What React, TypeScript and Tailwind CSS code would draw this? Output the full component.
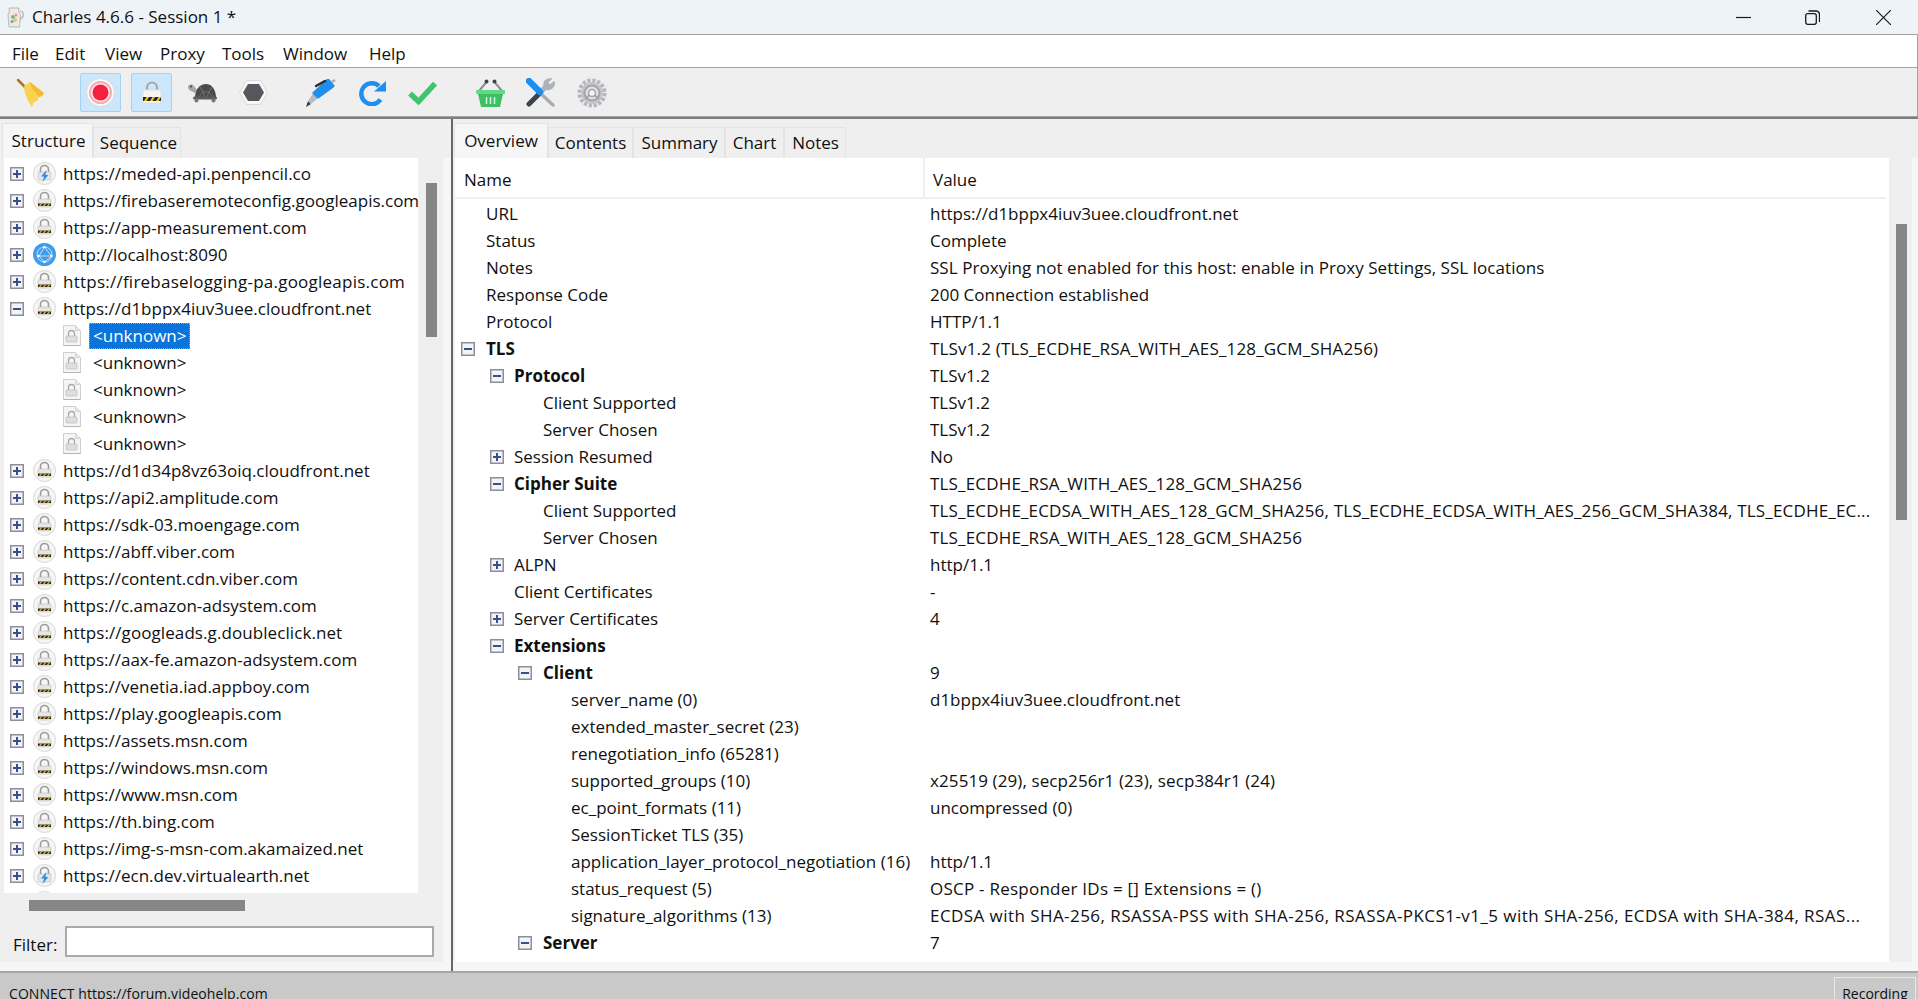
import type { ReactNode } from 'react';

const FONT = "font-['Open_Sans','Noto_Sans',sans-serif]";

type Host = { url: string; kind: 'lock' | 'bolt' | 'globe'; open?: boolean; track?: string };

const hostsTop: Host[] = [
  { url: 'https://meded-api.penpencil.co', kind: 'bolt' },
  { url: 'https://firebaseremoteconfig.googleapis.com', kind: 'lock' },
  { url: 'https://app-measurement.com', kind: 'lock' },
  { url: 'http://localhost:8090', kind: 'globe' },
  { url: 'https://firebaselogging-pa.googleapis.com', kind: 'lock', track: 'tracking-[0.24px]' },
  { url: 'https://d1bppx4iuv3uee.cloudfront.net', kind: 'lock', open: true },
];

const hostsBottom: Host[] = [
  { url: 'https://d1d34p8vz63oiq.cloudfront.net', kind: 'lock' },
  { url: 'https://api2.amplitude.com', kind: 'lock' },
  { url: 'https://sdk-03.moengage.com', kind: 'lock' },
  { url: 'https://abff.viber.com', kind: 'lock' },
  { url: 'https://content.cdn.viber.com', kind: 'lock' },
  { url: 'https://c.amazon-adsystem.com', kind: 'lock' },
  { url: 'https://googleads.g.doubleclick.net', kind: 'lock', track: 'tracking-[0.08px]' },
  { url: 'https://aax-fe.amazon-adsystem.com', kind: 'lock' },
  { url: 'https://venetia.iad.appboy.com', kind: 'lock' },
  { url: 'https://play.googleapis.com', kind: 'lock' },
  { url: 'https://assets.msn.com', kind: 'lock' },
  { url: 'https://windows.msn.com', kind: 'lock' },
  { url: 'https://www.msn.com', kind: 'lock' },
  { url: 'https://th.bing.com', kind: 'lock' },
  { url: 'https://img-s-msn-com.akamaized.net', kind: 'lock' },
  { url: 'https://ecn.dev.virtualearth.net', kind: 'bolt' },
];

type Row = { name: string; value?: string; level: number; bold?: boolean; toggle?: 'open' | 'closed'; track?: string };

const TLS = 'tracking-[0.17px]';

const rows: Row[] = [
  { name: 'URL', value: 'https://d1bppx4iuv3uee.cloudfront.net', level: 0 },
  { name: 'Status', value: 'Complete', level: 0 },
  { name: 'Notes', value: 'SSL Proxying not enabled for this host: enable in Proxy Settings, SSL locations', level: 0, track: 'tracking-[0.05px]' },
  { name: 'Response Code', value: '200 Connection established', level: 0 },
  { name: 'Protocol', value: 'HTTP/1.1', level: 0 },
  { name: 'TLS', value: 'TLSv1.2 (TLS_ECDHE_RSA_WITH_AES_128_GCM_SHA256)', level: 0, bold: true, toggle: 'open', track: TLS },
  { name: 'Protocol', value: 'TLSv1.2', level: 1, bold: true, toggle: 'open' },
  { name: 'Client Supported', value: 'TLSv1.2', level: 2 },
  { name: 'Server Chosen', value: 'TLSv1.2', level: 2 },
  { name: 'Session Resumed', value: 'No', level: 1, toggle: 'closed' },
  { name: 'Cipher Suite', value: 'TLS_ECDHE_RSA_WITH_AES_128_GCM_SHA256', level: 1, bold: true, toggle: 'open', track: TLS },
  { name: 'Client Supported', value: 'TLS_ECDHE_ECDSA_WITH_AES_128_GCM_SHA256, TLS_ECDHE_ECDSA_WITH_AES_256_GCM_SHA384, TLS_ECDHE_EC...', level: 2, track: TLS },
  { name: 'Server Chosen', value: 'TLS_ECDHE_RSA_WITH_AES_128_GCM_SHA256', level: 2, track: TLS },
  { name: 'ALPN', value: 'http/1.1', level: 1, toggle: 'closed' },
  { name: 'Client Certificates', value: '-', level: 1 },
  { name: 'Server Certificates', value: '4', level: 1, toggle: 'closed' },
  { name: 'Extensions', level: 1, bold: true, toggle: 'open' },
  { name: 'Client', value: '9', level: 2, bold: true, toggle: 'open' },
  { name: 'server_name (0)', value: 'd1bppx4iuv3uee.cloudfront.net', level: 3 },
  { name: 'extended_master_secret (23)', level: 3 },
  { name: 'renegotiation_info (65281)', level: 3 },
  { name: 'supported_groups (10)', value: 'x25519 (29), secp256r1 (23), secp384r1 (24)', level: 3, track: 'tracking-[0.1px]' },
  { name: 'ec_point_formats (11)', value: 'uncompressed (0)', level: 3 },
  { name: 'SessionTicket TLS (35)', level: 3 },
  { name: 'application_layer_protocol_negotiation (16)', value: 'http/1.1', level: 3 },
  { name: 'status_request (5)', value: 'OSCP - Responder IDs = [] Extensions = ()', level: 3, track: 'tracking-[0.24px]' },
  { name: 'signature_algorithms (13)', value: 'ECDSA with SHA-256, RSASSA-PSS with SHA-256, RSASSA-PKCS1-v1_5 with SHA-256, ECDSA with SHA-384, RSAS...', level: 3, track: 'tracking-[0.44px]' },
  { name: 'Server', value: '7', level: 2, bold: true, toggle: 'open' },
];

// small +/- box used by both trees
function Toggle({ open }: { open?: boolean }) {
  return (
    <svg width="14" height="14" viewBox="0 0 14 14" className="shrink-0">
      <rect x="0.75" y="0.75" width="12.5" height="12.5" fill="#f3f4f8" stroke="#8d8f96" strokeWidth="1.5" />
      <path d={open ? 'M3 7h8' : 'M3 7h8M7 3v8'} stroke="#35508f" strokeWidth="2" />
    </svg>
  );
}

function HostIcon({ kind }: { kind: Host['kind'] }) {
  if (kind === 'globe') {
    return (
      <svg width="23" height="23" viewBox="0 0 23 23" className="shrink-0">
        <circle cx="11.5" cy="11.5" r="11.500" fill="#3f9bec" />
        <circle cx="11.5" cy="11.5" r="7.500" fill="none" stroke="#d5eafb" strokeWidth="0.900" />
        <path d="M4 13h15M11.500 4L6 13l5.500 6 7-6z" fill="none" stroke="#d5eafb" strokeWidth="0.900" />
        <circle cx="11.5" cy="4" r="1.200" fill="#fff" />
        <circle cx="18.5" cy="13" r="1.200" fill="#fff" />
        <circle cx="5.5" cy="13" r="1.200" fill="#fff" />
        <circle cx="11.5" cy="19" r="1.200" fill="#fff" />
      </svg>
    );
  }
  return (
    <svg width="23" height="23" viewBox="0 0 23 23" className="shrink-0">
      <circle cx="11.5" cy="11.500" r="11" fill="#f6f6f6" stroke="#d6d6d6" />
      <path d="M7.500 10V7.500a4 4 0 0 1 8 0V10" fill="none" stroke="#9c9c9c" strokeWidth="1.600" />
      <rect x="5" y="10" width="13" height="8" rx="1" fill="#e6e6e6" stroke="#b0b0b0" strokeWidth="0.500" />
      {kind === 'lock' ? (
        <g>
          <rect x="5" y="14.500" width="13" height="2.500" fill="#2f2f2f" />
          <path d="M6 17l1.700-2.500h1.500L7.500 17zM10 17l1.700-2.500h1.500L11.500 17zM14 17l1.700-2.500h1.500L15.500 17z" fill="#e6b81c" />
        </g>
      ) : (
        <path d="M13.500 8l-5.500 6.500h3L9.500 20l6-7h-3z" fill="#2b92ea" />
      )}
    </svg>
  );
}

function DocLock() {
  return (
    <svg width="18" height="21" viewBox="0 0 18 21" className="shrink-0">
      <path d="M.5.500h12l5 5v15H.5z" fill="#f5f5f5" stroke="#cfcfcf" />
      <path d="M.5 20.500h17" stroke="#b5b5b5" />
      <path d="M12.500.500v5h5" fill="#e6e6e6" stroke="#d5d5d5" />
      <path d="M5.500 11V8.500a3 3 0 0 1 6 0V11" fill="none" stroke="#a9a9a9" strokeWidth="1.300" />
      <rect x="3" y="11" width="11" height="6" rx="1" fill="#dedede" stroke="#b5b5b5" strokeWidth="0.600" />
    </svg>
  );
}

function HostRow({ host, bare }: { host: Host; bare?: boolean }) {
  return (
    <div className="flex h-[27px] items-center whitespace-nowrap">
      <span className="ml-[6px] mr-[9px] flex w-[14px]">{bare ? null : <Toggle open={host.open} />}</span>
      <HostIcon kind={host.kind} />
      {bare ? null : <span className={`ml-[7px] ${host.track ?? ''}`}>{host.url}</span>}
    </div>
  );
}

function ChildRow({ selected }: { selected?: boolean }) {
  return (
    <div className="flex h-[27px] items-center pl-[59px]">
      <DocLock />
      <span
        className={
          selected
            ? 'ml-[8px] flex h-[26px] items-center border border-dotted border-[#f5942a] bg-[#0a74da] px-[3px] text-white'
            : 'ml-[12px]'
        }
      >
        {'<unknown>'}
      </span>
    </div>
  );
}

function Broom() {
  return (
    <svg width="30" height="30" viewBox="0 0 30 30">
      <path d="M2 2l8 8" stroke="#a9762a" strokeWidth="2.500" strokeLinecap="round" />
      <path d="M8 8l6-4 14 11-2 3-3 1-2 4-3 1-2 5-4-6-3-8z" fill="#f9d24f" />
      <path d="M14 4l14 11-2 3-3 1-7-9z" fill="#f2bc36" />
    </svg>
  );
}

function Record() {
  return (
    <svg width="29" height="29" viewBox="0 0 29 29">
      <circle cx="14.5" cy="14.500" r="14" fill="#fafafa" stroke="#d9d9d9" />
      <circle cx="14.5" cy="14.500" r="11.500" fill="#f6abb1" />
      <circle cx="14.5" cy="14.500" r="9.500" fill="#fdeef0" />
      <circle cx="14.5" cy="14.500" r="8" fill="#f5203f" />
    </svg>
  );
}

function Padlock() {
  return (
    <svg width="20" height="23" viewBox="0 0 20 23">
      <path d="M5 11V6.500a5 5 0 0 1 10 0V11" fill="none" stroke="#a8a8a8" strokeWidth="2.200" />
      <rect x="1" y="9" width="18" height="13" rx="1.500" fill="#f6f6f6" stroke="#e0e0e0" />
      <rect x="1" y="16" width="18" height="4" fill="#262626" />
      <path d="M2 20l2.500-4H7l-2.500 4zM8 20l2.500-4H13l-2.500 4zM14 20l2.500-4H19l-2.500 4z" fill="#f0c41f" />
    </svg>
  );
}

function Turtle() {
  return (
    <svg width="30" height="20" viewBox="0 0 30 20">
      <path d="M1 3.500C2 1 6 1 7 3l3 4-2 3-4-2C2 7 1 5.500 1 3.500z" fill="#a4a8ab" />
      <circle cx="4" cy="3.500" r="0.900" fill="#333" />
      <path d="M8 15C8 6 13 1 19 1s10 6 10 14z" fill="#4a4a4c" />
      <path d="M13 4l3 5-4 5M25 4l-3 5 4 5M16 9h6M18 14l-2-5M20 14l2-5" stroke="#77787a" strokeWidth="0.800" fill="none" />
      <rect x="6" y="13.500" width="24" height="3" rx="1.500" fill="#5c5c5e" />
      <circle cx="9.500" cy="17.500" r="2" fill="#77787a" />
      <circle cx="26.500" cy="17.500" r="2" fill="#77787a" />
    </svg>
  );
}

function Hexagon() {
  return (
    <svg width="29" height="25" viewBox="0 0 29 25">
      <path d="M7.500.500h14l7 12-7 12h-14l-7-12z" fill="#f8f8f8" stroke="#d9d9d9" />
      <path d="M9 4h11l5 8.500-5 8.500H9l-5-8.500z" fill="#55575c" />
    </svg>
  );
}

function Pen() {
  return (
    <svg width="30" height="28" viewBox="0 0 30 28">
      <path d="M0 28l2-6 3 3z" fill="#3a3a3a" />
      <path d="M2 22l6-9 5 5-8 7z" fill="#b6bac4" />
      <path d="M8 14l4 4 15-11-5-6z" fill="#1f8fef" stroke="#1f8fef" strokeWidth="3" strokeLinejoin="round" />
      <path d="M10 7l9-5" stroke="#2b2b2b" strokeWidth="2.500" strokeLinecap="round" />
      <path d="M26 3l3-2" stroke="#a8abb0" strokeWidth="2.500" />
    </svg>
  );
}

function Refresh() {
  return (
    <svg width="27" height="26" viewBox="0 0 27 26">
      <path d="M21.500 19.500a10.500 10.500 0 1 1-1.500-13.500" fill="none" stroke="#1f8fef" strokeWidth="4.500" />
      <path d="M27 1v10.500H15z" fill="#1f8fef" />
    </svg>
  );
}

function Check() {
  return (
    <svg width="29" height="24" viewBox="0 0 29 24">
      <path d="M2 12.500l8.500 8L27 2.500" fill="none" stroke="#41c46e" strokeWidth="5.500" />
    </svg>
  );
}

function Basket() {
  return (
    <svg width="29" height="28" viewBox="0 0 29 28">
      <path d="M10.500 3L3 12M18.500 3L26 12" stroke="#8c8f94" strokeWidth="2" />
      <circle cx="10.500" cy="2.500" r="2" fill="#444" />
      <circle cx="18.500" cy="2.500" r="2" fill="#444" />
      <path d="M2 15h25l-3 13H5z" fill="#3fbf63" />
      <rect x="0" y="11" width="29" height="4" rx="1" fill="#62da84" />
      <path d="M10.500 18v7M14.500 18v7M18.500 18v7" stroke="#d6f2df" strokeWidth="1.500" />
    </svg>
  );
}

function Tools() {
  return (
    <svg width="30" height="30" viewBox="0 0 30 30">
      <path d="M14 15l13 12" stroke="#a9adb3" strokeWidth="3.500" strokeLinecap="round" />
      <path d="M28 4a6 6 0 0 1-8 7L17 14l-2-3 3-3a6 6 0 0 1 7-7l-3.500 3.500 2 3z" fill="#aeb2b8" stroke="#aeb2b8" strokeWidth="1.500" />
      <path d="M17 12l-5 5" stroke="#aeb2b8" strokeWidth="4" />
      <path d="M13 16L3 26" stroke="#3d434b" strokeWidth="5" strokeLinecap="round" />
      <path d="M3 3l11 11" stroke="#1f8fef" strokeWidth="6.500" strokeLinecap="round" />
    </svg>
  );
}

function Gear() {
  return (
    <svg width="30" height="30" viewBox="0 0 30 30">
      <circle cx="15" cy="15" r="12.500" fill="none" stroke="#b4b6bb" strokeWidth="4" strokeDasharray="3.200 1.700" />
      <circle cx="15" cy="15" r="11" fill="#c4c6ca" />
      <circle cx="15" cy="15" r="7.500" fill="#e1e2e4" stroke="#a2a4a9" strokeWidth="2" />
      <circle cx="15" cy="15" r="3.500" fill="#f4f4f4" stroke="#a2a4a9" strokeWidth="1.500" />
      <path d="M8 21l4-3.500M22 21l-4-3.500" stroke="#a2a4a9" strokeWidth="2" />
    </svg>
  );
}

function AppIcon() {
  return (
    <svg width="19" height="22" viewBox="0 0 19 22">
      <path d="M3 2h10l-.5 3 2 4-1 12H3L2 9l1.500-4z" fill="#ecebe6" stroke="#a4a49e" strokeWidth="0.700" />
      <circle cx="7" cy="11" r="2" fill="#76b59a" />
      <circle cx="10" cy="9" r="1.500" fill="#e98fb0" />
      <circle cx="9" cy="14" r="2" fill="#e4c95d" />
      <circle cx="6" cy="15.500" r="1.500" fill="#7f9bd6" />
      <path d="M14 5c5 0 4 7 0 8" fill="none" stroke="#b5b5b0" strokeWidth="1.200" />
    </svg>
  );
}

function ToolSlot({ active, children, className }: { active?: boolean; children: ReactNode; className: string }) {
  return (
    <div
      className={`flex h-[39px] items-center justify-center rounded-[2px] ${
        active ? 'border border-[#a6d2f2] bg-[#cce6fb]' : ''
      } ${className}`}
    >
      {children}
    </div>
  );
}

function Tab({ label, active, className }: { label: string; active?: boolean; className: string }) {
  return (
    <div
      className={`flex items-center justify-center border border-b-0 border-[#e3e3e3] ${
        active ? 'h-[35px] bg-[#f6f6f6]' : 'h-[31px] bg-[#efefef]'
      } ${className}`}
    >
      {label}
    </div>
  );
}

// padding per tree level in the overview table
function TableRow({ row }: { row: Row }) {
  const pad = ['pl-[31px]', 'pl-[59px]', 'pl-[88px]', 'pl-[116px]'][row.level];
  const togglePad = ['pl-[6px]', 'pl-[35px]', 'pl-[63px]', 'pl-[90px]'][row.level];
  const gap = ['ml-[11px]', 'ml-[10px]', 'ml-[11px]', 'ml-[11px]'][row.level];
  return (
    <div className="flex h-[27px] shrink-0 items-center whitespace-nowrap">
      <div className={`flex w-[475px] items-center ${row.toggle ? togglePad : pad}`}>
        {row.toggle ? <Toggle open={row.toggle === 'open'} /> : null}
        <span className={`${row.toggle ? gap : ''} ${row.bold ? 'font-bold' : ''}`}>{row.name}</span>
      </div>
      <div className={row.track ?? ''}>{row.value}</div>
    </div>
  );
}

export default function App() {
  return (
    <div className={`flex h-[999px] w-[1918px] flex-col overflow-hidden bg-white text-[17px] text-[#101010] ${FONT}`}>
      <div className="flex h-[35px] shrink-0 items-center border-b border-[#a2a2a2] bg-[#eef3f8]">
        <span className="ml-[6px] flex"><AppIcon /></span>
        <span className="ml-[7px] flex-1">Charles 4.6.6 - Session 1 *</span>
        <svg width="15" height="15" viewBox="0 0 15 15" className="mr-[54px]">
          <path d="M0 7.500h15" stroke="#1a1a1a" strokeWidth="1.200" />
        </svg>
        <svg width="15" height="15" viewBox="0 0 15 15" className="mr-[56px]" fill="none" stroke="#1a1a1a" strokeWidth="1.300">
          <rect x="0.700" y="3.700" width="10.600" height="10.600" rx="2" />
          <path d="M3.500 1h7.500a3.500 3.500 0 0 1 3.500 3.500V12" />
        </svg>
        <svg width="15" height="15" viewBox="0 0 15 15" className="mr-[27px]" stroke="#1a1a1a" strokeWidth="1.200">
          <path d="M0 0l15 15M15 0L0 15" />
        </svg>
      </div>

      <div className="flex h-[33px] shrink-0 items-center border-b border-r border-[#a2a2a2] bg-white pl-[12px] pt-[5px]">
        <span className="w-[43px]">File</span>
        <span className="w-[50px]">Edit</span>
        <span className="w-[55px]">View</span>
        <span className="w-[62px]">Proxy</span>
        <span className="w-[61px]">Tools</span>
        <span className="w-[86px]">Window</span>
        <span>Help</span>
      </div>

      <div className="flex h-[49px] shrink-0 items-center border-b border-r border-[#a2a2a2] bg-[#efefef] pl-[15px] pt-[1px]">
        <ToolSlot className="w-[32px]"><Broom /></ToolSlot>
        <ToolSlot active className="ml-[33px] w-[41px]"><Record /></ToolSlot>
        <ToolSlot active className="ml-[10px] w-[41px]"><Padlock /></ToolSlot>
        <ToolSlot className="ml-[15px] w-[30px]"><Turtle /></ToolSlot>
        <ToolSlot className="ml-[21px] w-[30px]"><Hexagon /></ToolSlot>
        <ToolSlot className="ml-[38px] w-[30px]"><Pen /></ToolSlot>
        <ToolSlot className="ml-[21px] w-[30px]"><Refresh /></ToolSlot>
        <ToolSlot className="ml-[20px] w-[30px]"><Check /></ToolSlot>
        <ToolSlot className="ml-[38px] w-[30px]"><Basket /></ToolSlot>
        <ToolSlot className="ml-[21px] w-[30px]"><Tools /></ToolSlot>
        <ToolSlot className="ml-[21px] w-[30px]"><Gear /></ToolSlot>
      </div>

      <div className="flex min-h-0 flex-1 border-t-2 border-[#7d7d7d] bg-[#f6f6f6]">
        <div className="flex w-[453px] shrink-0 flex-col border-r-2 border-[#666]">
          <div className="flex h-[39px] shrink-0 items-end bg-[#efefef] pl-[2px]">
            <Tab label="Structure" active className="w-[91px] pl-[2px]" />
            <Tab label="Sequence" className="w-[88px] pl-[3px]" />
          </div>
          <div className="mr-[8px] flex h-[804px] shrink-0 flex-col bg-[#efefef]">
            <div className="flex h-[735px] shrink-0">
              <div className="ml-[4px] w-[414px] overflow-hidden bg-white pt-[2px]">
                {hostsTop.map((h) => <HostRow key={h.url} host={h} />)}
                <ChildRow selected />
                <ChildRow />
                <ChildRow />
                <ChildRow />
                <ChildRow />
                {hostsBottom.map((h) => <HostRow key={h.url} host={h} />)}
                <HostRow bare host={{ url: '', kind: 'lock' }} />
              </div>
              <div className="w-[25px] pl-[8px] pt-[25px]">
                <div className="h-[154px] w-[11px] bg-[#868686]" />
              </div>
            </div>
            <div className="ml-[29px] mt-[7px] h-[11px] w-[216px] shrink-0 bg-[#868686]" />
            <div className="mt-[14px] flex items-center pl-[13px]">
              <span className="w-[52px] pt-[7px]">Filter:</span>
              <div className="h-[31px] w-[369px] border-2 border-[#a9a9ae] bg-white" />
            </div>
          </div>
        </div>

        <div className="flex min-w-0 flex-1 flex-col">
          <div className="flex h-[39px] shrink-0 items-end bg-[#efefef] pl-[1px]">
            <Tab label="Overview" active className="w-[94px]" />
            <Tab label="Contents" className="w-[85px]" />
            <Tab label="Summary" className="w-[92px] pl-[1px]" />
            <Tab label="Chart" className="w-[59px]" />
            <Tab label="Notes" className="w-[62px] pl-[1px]" />
          </div>
          <div className="mr-[6px] flex h-[804px] shrink-0 bg-[#efefef] pl-[2px]">
            <div className="flex w-[1434px] shrink-0 flex-col bg-white">
              <div className="flex h-[41px] w-[1431px] shrink-0 border-b-2 border-[#efefef]">
                <div className="flex w-[470px] items-center border-r-2 border-[#efefef] pl-[9px] pt-[4px]">Name</div>
                <div className="flex flex-1 items-center pl-[8px] pt-[4px]">Value</div>
              </div>
              <div className="flex flex-col pt-[1px]">
                {rows.map((r, i) => <TableRow key={i} row={r} />)}
              </div>
            </div>
            <div className="w-[23px] pl-[7px] pt-[66px]">
              <div className="h-[296px] w-[11px] bg-[#868686]" />
            </div>
          </div>
        </div>
      </div>

      <div className="relative flex h-[28px] shrink-0 items-end border-t-2 border-[#a6a6a6] bg-[#c9c9c9] pl-[9px] text-[14px]">
        <span className="translate-y-[5px] tracking-[0.07px]">CONNECT https://forum.videohelp.com</span>
        <div className="absolute bottom-0 right-[2px] flex h-[22px] w-[82px] items-end justify-center border border-b-0 border-[#e8e8e8]">
          <span className="translate-y-[5px]">Recording</span>
        </div>
      </div>
    </div>
  );
}
